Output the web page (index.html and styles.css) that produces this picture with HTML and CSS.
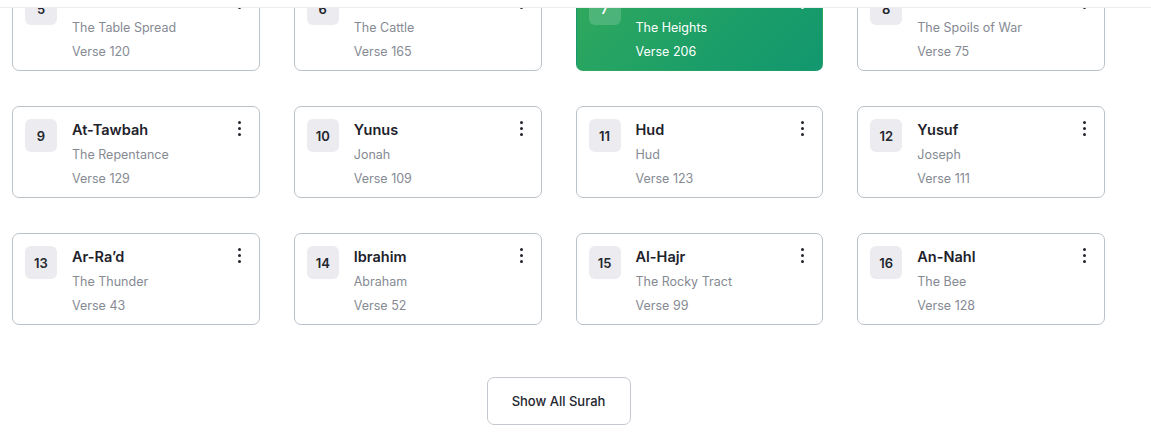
FILE: index.html
```html
<!DOCTYPE html>
<html lang="en">
<head>
<meta charset="utf-8">
<title>Surah List</title>
<link rel="stylesheet" href="styles.css">
</head>
<body>
<header class="topbar"></header>
<main class="content">
  <section class="surah-grid">
    <article class="card"><div class="num">5</div><div class="info"><h3 class="name">Al-Ma'idah</h3><p class="meaning">The Table Spread</p><p class="verse">Verse 120</p></div><span class="more"><i></i><i></i><i></i></span></article>
    <article class="card"><div class="num">6</div><div class="info"><h3 class="name">Al-An'am</h3><p class="meaning">The Cattle</p><p class="verse">Verse 165</p></div><span class="more"><i></i><i></i><i></i></span></article>
    <article class="card active"><div class="num">7</div><div class="info"><h3 class="name">Al-A'raf</h3><p class="meaning">The Heights</p><p class="verse">Verse 206</p></div><span class="more"><i></i><i></i><i></i></span></article>
    <article class="card"><div class="num">8</div><div class="info"><h3 class="name">Al-Anfal</h3><p class="meaning">The Spoils of War</p><p class="verse">Verse 75</p></div><span class="more"><i></i><i></i><i></i></span></article>

    <article class="card"><div class="num">9</div><div class="info"><h3 class="name">At-Tawbah</h3><p class="meaning">The Repentance</p><p class="verse">Verse 129</p></div><span class="more"><i></i><i></i><i></i></span></article>
    <article class="card"><div class="num">10</div><div class="info"><h3 class="name">Yunus</h3><p class="meaning">Jonah</p><p class="verse">Verse 109</p></div><span class="more"><i></i><i></i><i></i></span></article>
    <article class="card"><div class="num">11</div><div class="info"><h3 class="name">Hud</h3><p class="meaning">Hud</p><p class="verse">Verse 123</p></div><span class="more"><i></i><i></i><i></i></span></article>
    <article class="card"><div class="num">12</div><div class="info"><h3 class="name">Yusuf</h3><p class="meaning">Joseph</p><p class="verse">Verse 111</p></div><span class="more"><i></i><i></i><i></i></span></article>

    <article class="card"><div class="num">13</div><div class="info"><h3 class="name">Ar-Ra’d</h3><p class="meaning">The Thunder</p><p class="verse">Verse 43</p></div><span class="more"><i></i><i></i><i></i></span></article>
    <article class="card"><div class="num">14</div><div class="info"><h3 class="name">Ibrahim</h3><p class="meaning">Abraham</p><p class="verse">Verse 52</p></div><span class="more"><i></i><i></i><i></i></span></article>
    <article class="card"><div class="num">15</div><div class="info"><h3 class="name">Al-Hajr</h3><p class="meaning">The Rocky Tract</p><p class="verse">Verse 99</p></div><span class="more"><i></i><i></i><i></i></span></article>
    <article class="card"><div class="num">16</div><div class="info"><h3 class="name">An-Nahl</h3><p class="meaning">The Bee</p><p class="verse">Verse 128</p></div><span class="more"><i></i><i></i><i></i></span></article>
  </section>
  <div class="actions">
    <button class="show-all" type="button">Show All Surah</button>
  </div>
</main>
</body>
</html>
```
FILE: styles.css
```css
* { box-sizing: border-box; }
html, body { margin: 0; padding: 0; background: #fff; }
body {
  font-family: "Inter", "Liberation Sans", sans-serif;
  color: #1e222b;
  overflow: hidden;
}
.topbar {
  position: fixed;
  top: 0; left: 0; right: 0;
  height: 8px;
  background: #fff;
  border-bottom: 1px solid #ececef;
  z-index: 10;
}
.content {
  margin-top: -21px;
  padding: 0 46px 0 12px;
}
.surah-grid {
  display: grid;
  grid-template-columns: repeat(4, 1fr);
  column-gap: 34px;
  row-gap: 35px;
}
.card {
  display: flex;
  align-items: flex-start;
  height: 92px;
  padding: 14px 12px 7px 12px;
  border: 1px solid #bcc2c9;
  border-radius: 7px;
  background: #fff;
}
.num {
  flex: 0 0 auto;
  width: 32px;
  height: 33px;
  margin-top: -2px;
  border-radius: 6px;
  background: #ececf0;
  display: flex;
  align-items: center;
  justify-content: center;
  font-size: 13px;
  font-weight: 600;
  color: #23262e;
}
.info { flex: 1; margin-left: 15px; }
.name {
  margin: 0;
  font-size: 14.5px;
  line-height: 18px;
  font-weight: 600;
  color: #1e222b;
}
.meaning, .verse {
  margin: 0;
  font-size: 12.5px;
  line-height: 20px;
  color: #868a93;
}
.meaning { margin-top: 6px; }
.verse { margin-top: 4px; }
.more {
  display: flex;
  flex-direction: column;
  gap: 3px;
  margin-top: 0;
  margin-right: 6px;
}
.more i {
  display: block;
  width: 3px;
  height: 3px;
  border-radius: 50%;
  background: #22252c;
}
.card.active {
  border-color: transparent;
  background: linear-gradient(135deg, #33aa5c 0%, #1b9e68 60%, #12976f 100%);
}
.card.active .num { background: rgba(255,255,255,0.16); color: #fff; }
.card.active .name, .card.active .meaning, .card.active .verse { color: #fff; }
.card.active .more i { background: #fff; }
.actions {
  display: flex;
  justify-content: center;
  margin-top: 52px;
}
.show-all {
  width: 144px;
  height: 48px;
  border: 1px solid #c4c9cf;
  border-radius: 7px;
  background: #fff;
  font-family: "Inter", "Liberation Sans", sans-serif;
  font-size: 13px;
  font-weight: 500;
  color: #23262e;
  cursor: pointer;
}
```
